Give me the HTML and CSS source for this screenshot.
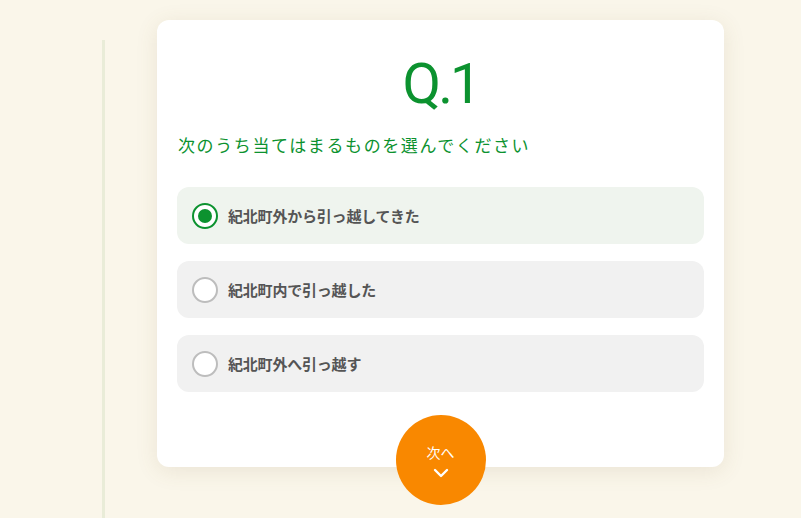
FILE: index.html
```html
<!DOCTYPE html>
<html lang="ja">
<head>
<meta charset="utf-8">
<link rel="stylesheet" href="styles.css">
</head>
<body>
<div class="page">
  <div class="rail"></div>
  <main class="card">
    <h1 class="qnum">Q.1</h1>
    <p class="lead">次のうち当てはまるものを選んでください</p>
    <ul class="options">
      <li class="option selected"><span class="radio"></span><span class="label">紀北町外から引っ越してきた</span></li>
      <li class="option"><span class="radio"></span><span class="label">紀北町内で引っ越した</span></li>
      <li class="option"><span class="radio"></span><span class="label">紀北町外へ引っ越す</span></li>
    </ul>
    <button class="next" type="button">
      <span class="next-text">次へ</span>
      <svg class="chev" width="16" height="10" viewBox="0 0 16 10"><path d="M2 2 L8 8 L14 2" fill="none" stroke="#fff" stroke-width="2.4" stroke-linecap="round" stroke-linejoin="round"/></svg>
    </button>
  </main>
</div>
</body>
</html>
```

FILE: styles.css
```css
html, body {
  margin: 0;
  padding: 0;
  background: #faf6ea;
  height: 100%;
  overflow: hidden;
}
body {
  font-family: "Noto Sans CJK JP", "Noto Sans", sans-serif;
}
.page {
  display: flex;
  align-items: flex-start;
  min-height: 518px;
}
.rail {
  width: 3px;
  margin-left: 102px;
  margin-top: 40px;
  align-self: stretch;
  background: #e9ecd8;
}
.card {
  margin-left: 52px;
  margin-top: 20px;
  width: 567px;
  box-sizing: border-box;
  background: #fff;
  border-radius: 12px;
  box-shadow: 0 4px 22px rgba(120, 100, 60, 0.12);
  padding: 36px 20px 0;
  display: flex;
  flex-direction: column;
  align-items: stretch;
}
.qnum {
  margin: 0;
  text-align: center;
  font-family: Roboto, "Liberation Sans", sans-serif;
  font-weight: 400;
  font-size: 56px;
  line-height: 56px;
  color: #0c922f;
  letter-spacing: -3px;
}
.lead {
  margin: 20px 0 0;
  font-size: 17px;
  line-height: 26px;
  letter-spacing: 1.6px;
  color: #0c922f;
  padding-left: 1px;
}
.options {
  list-style: none;
  margin: 29px 0 0;
  padding: 0;
  display: flex;
  flex-direction: column;
  gap: 17px;
}
.option {
  height: 57px;
  border-radius: 12px;
  background: #f1f1f1;
  display: flex;
  align-items: center;
  padding-left: 15px;
  gap: 10px;
}
.option.selected {
  background: #eff4ee;
}
.radio {
  width: 26px;
  height: 26px;
  box-sizing: border-box;
  border-radius: 50%;
  border: 2px solid #bdbdbd;
  background: #fff;
  display: flex;
  align-items: center;
  justify-content: center;
}
.selected .radio {
  border-color: #0c922f;
}
.selected .radio::after {
  content: "";
  width: 14px;
  height: 14px;
  border-radius: 50%;
  background: #0c922f;
}
.label {
  font-size: 15px;
  font-weight: 700;
  color: #555;
  letter-spacing: -0.2px;
}
.next {
  align-self: center;
  margin: 23px 0 -38px;
  width: 90px;
  height: 90px;
  border-radius: 50%;
  border: none;
  background: #f98800;
  color: #fff;
  font-family: "Noto Sans CJK JP", sans-serif;
  font-size: 14px;
  display: flex;
  flex-direction: column;
  align-items: center;
  justify-content: center;
  padding: 0;
  gap: 7px;
}
.next-text {
  line-height: 18px;
}
.chev {
  display: block;
}
```
